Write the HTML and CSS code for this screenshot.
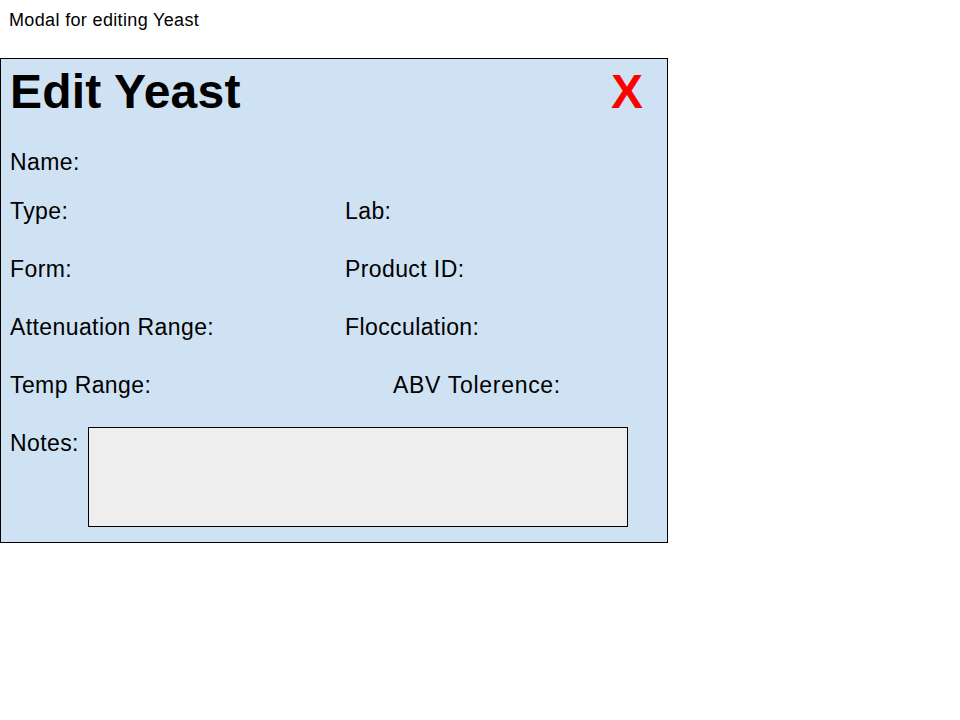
FILE: index.html
```html
<!DOCTYPE html>
<html>
<head>
<meta charset="utf-8">
<link rel="stylesheet" href="styles.css">
</head>
<body>
<div class="caption">Modal for editing Yeast</div>
<div class="modal">
  <div class="title-row">
    <h1 class="title">Edit Yeast</h1>
    <span class="close">X</span>
  </div>
  <div class="field name-row">Name:</div>
  <div class="grid">
    <div class="field">Type:</div>
    <div class="field">Lab:</div>
    <div class="field">Form:</div>
    <div class="field">Product ID:</div>
    <div class="field">Attenuation Range:</div>
    <div class="field">Flocculation:</div>
    <div class="field">Temp Range:</div>
    <div class="field indent">ABV Tolerence:</div>
  </div>
  <div class="notes-row">
    <div class="field notes-label">Notes:</div>
    <div class="notes-box"></div>
  </div>
</div>
</body>
</html>
```
FILE: styles.css
```css
html, body {
  margin: 0;
  padding: 0;
  background: #ffffff;
  font-family: "Liberation Sans", Arial, sans-serif;
  color: #000;
}
.caption {
  font-size: 18px;
  letter-spacing: 0.35px;
  line-height: 20px;
  padding: 10px 9px 0;
}
.modal {
  margin-top: 28px;
  height: 483px;
  width: 657px;
  border: 1px solid #000;
  background: #cfe2f3;
  padding: 0 0 0 9px;
}
.title-row {
  display: flex;
  justify-content: space-between;
  align-items: baseline;
  padding-top: 5px;
  padding-right: 24px;
}
.title {
  margin: 0;
  font-size: 48px;
  letter-spacing: 0.2px;
  line-height: 56px;
  font-weight: bold;
}
.close {
  font-size: 48px;
  line-height: 56px;
  font-weight: bold;
  color: #ff0000;
}
.field {
  font-size: 23px;
  letter-spacing: 0.4px;
  line-height: 26px;
}
.name-row {
  margin-top: 29px;
}
.grid {
  display: grid;
  grid-template-columns: 335px 1fr;
  row-gap: 32px;
  margin-top: 23px;
}
.indent {
  padding-left: 48px;
  letter-spacing: 0.7px;
}
.notes-row {
  display: flex;
  margin-top: 29px;
}
.notes-label {
  margin-top: 3px;
  width: 78px;
}
.notes-box {
  width: 538px;
  height: 98px;
  border: 1px solid #000;
  background: #eeeeee;
}
```
